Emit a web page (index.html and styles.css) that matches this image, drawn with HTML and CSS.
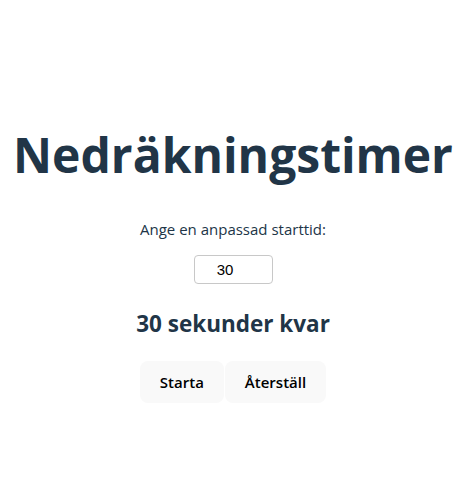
FILE: index.html
```html
<!DOCTYPE html>
<html lang="sv">
<head>
<meta charset="utf-8">
<title>Nedräkningstimer</title>
<link rel="stylesheet" href="styles.css">
</head>
<body>
<main class="app">
  <h1 class="title">Nedräkningstimer</h1>
  <label class="label" for="start">Ange en anpassad starttid:</label>
  <input class="time-input" id="start" type="text" value="30">
  <h2 class="remaining">30 sekunder kvar</h2>
  <div class="actions">
    <button class="btn">Starta</button>
    <button class="btn">Återställ</button>
  </div>
</main>
</body>
</html>
```
FILE: styles.css
```css
html, body {
  margin: 0;
  padding: 0;
  background: #ffffff;
}
body {
  font-family: "Open Sans", "Noto Sans", sans-serif;
  color: #213547;
}
.app {
  display: flex;
  flex-direction: column;
  align-items: center;
  padding-top: 127px;
}
.title {
  margin: 0;
  font-size: 48px;
  font-weight: 700;
  line-height: 56px;
  letter-spacing: 0;
}
.label {
  margin-top: 35px;
  font-size: 15px;
  line-height: 22px;
}
.time-input {
  margin-top: 15px;
  box-sizing: border-box;
  width: 79px;
  height: 29px;
  padding: 0 16px 0 0;
  border: 1px solid #c8c8c8;
  border-radius: 4px;
  font-family: "Liberation Sans", Arial, sans-serif;
  font-size: 15px;
  color: #000;
  text-align: center;
  background: #fff;
}
.remaining {
  margin: 25px 0 0;
  font-size: 22.5px;
  font-weight: 700;
  line-height: 30px;
}
.actions {
  margin-top: 22px;
  display: flex;
  gap: 1px;
}
.btn {
  height: 42px;
  padding: 0 19px;
  border: 1px solid transparent;
  border-radius: 8px;
  background: #f9f9f9;
  font-family: "Open Sans", sans-serif;
  font-size: 15px;
  font-weight: 600;
  color: #000;
}
```
